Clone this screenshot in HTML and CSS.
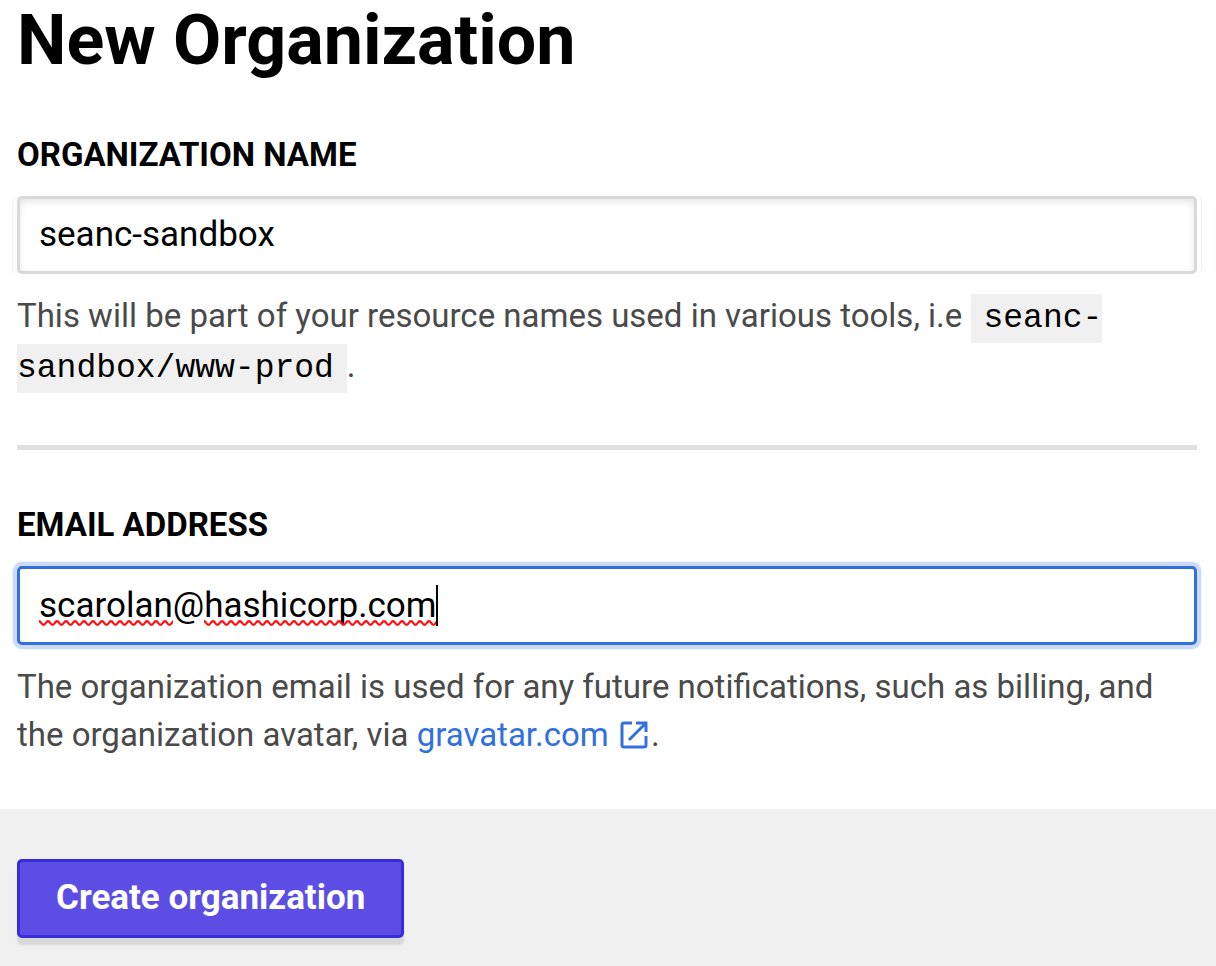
FILE: index.html
```html
<!DOCTYPE html>
<html lang="en">
<head>
<meta charset="utf-8">
<meta name="viewport" content="width=device-width, initial-scale=1">
<title>New Organization</title>
<link rel="stylesheet" href="styles.css">
</head>
<body>
<form class="org-form">
  <div class="fields">
    <h1 class="title">New Organization</h1>
    <div class="field">
      <label class="label" for="org-name">ORGANIZATION NAME</label>
      <input class="input" id="org-name" type="text" value="seanc-sandbox">
      <p class="help help-name">This will be part of your resource names used in various tools, i.e <code class="code">seanc-sandbox/www-prod</code>.</p>
    </div>
    <hr class="divider">
    <div class="field">
      <label class="label" for="org-email">EMAIL ADDRESS</label>
      <div class="input-wrap">
        <input class="input input-focus" id="org-email" type="text" spellcheck="false" value="scarolan@hashicorp.com">
        <div class="marks" aria-hidden="true"><span class="typo">scarolan</span>@<span class="typo">hashicorp.com</span><span class="caret"></span></div>
      </div>
      <p class="help">The organization email is used for any future notifications, such as billing, and the organization avatar, via <a class="link" href="#">gravatar.com <svg class="icon" viewBox="0 0 28 28" aria-hidden="true"><path d="M12 2H4Q2 2 2 4V24Q2 26 4 26H24Q26 26 26 24V15M16 2H26V11M25 3 9 19"/></svg></a>.</p>
    </div>
  </div>
  <div class="actions">
    <button class="button" type="button">Create organization</button>
  </div>
</form>
</body>
</html>
```
FILE: styles.css
```css
* {
  box-sizing: border-box;
}

body {
  margin: 0;
  background: #fff;
  color: #000;
  font-family: Roboto, "Liberation Sans", sans-serif;
  font-size: 33px;
}

.org-form {
  display: flex;
  flex-direction: column;
  min-height: 100vh;
}

.fields {
  padding: 0 19px 50px 17px;
}

.title {
  margin: 0 0 55px;
  font-size: 70px;
  line-height: 80px;
  font-weight: 700;
}

.label {
  display: block;
  margin-bottom: 21px;
  font-size: 33px;
  line-height: 40px;
  font-weight: 700;
}

.input {
  display: block;
  width: 100%;
  height: 78px;
  padding: 0 19px 2px;
  border: 3px solid #d9d9d9;
  border-radius: 5px;
  background: #fff;
  box-shadow: inset 0 3px 7px #e6e6e6, 4px 0 #fff, -4px 0 #fff, 5px 0 #edf1fd, -5px 0 #edf1fd;
  color: #000;
  font: 35px/40px Roboto, "Liberation Sans", sans-serif;
  outline: none;
}

.input-wrap {
  position: relative;
}

.input-focus {
  height: 79px;
  padding-bottom: 0;
  border-color: #3270de;
  box-shadow: 0 0 0 4px #cddbf6, 0 0 0 5px #edf3fd;
}

.marks {
  position: absolute;
  top: 19px;
  left: 22px;
  display: flex;
  color: transparent;
  font-size: 35px;
  line-height: 40px;
  pointer-events: none;
}

.typo {
  padding-bottom: 1px;
  background: url("data:image/svg+xml,%3Csvg xmlns='http://www.w3.org/2000/svg' width='9' height='6'%3E%3Cpath d='M-2.25 3Q0 -.5 2.25 3T6.75 3T11.25 3' fill='none' stroke='%23ff1010' stroke-width='2.3'/%3E%3C/svg%3E") repeat-x left bottom;
}

.caret {
  width: 2px;
  height: 41px;
  background: #000;
}

.help {
  margin: 18px 0 0;
  color: #4a4a4a;
  line-height: 48px;
}

.help-name {
  margin-top: 17px;
  line-height: 50px;
}

.code {
  padding: 6px 13px;
  background: #f0f0f0;
  color: #000;
  font-family: "Liberation Mono", monospace;
  font-size: 33px;
  line-height: 40px;
}

.divider {
  height: 5px;
  margin: 54px 0 55px;
  border: 0;
  background: #e0e0e0;
}

.link {
  color: #3270de;
  text-decoration: none;
}

.icon {
  width: 28px;
  height: 28px;
  margin: 0 3px;
  vertical-align: -3px;
  fill: none;
  stroke: currentColor;
  stroke-width: 3;
}

.actions {
  flex: 1;
  padding: 50px 17px 28px;
  background: #f0f0f0;
}

.button {
  padding: 15px 36px 17px;
  border: 3px solid #3a2bd8;
  border-radius: 5px;
  background: #5c4ee5;
  box-shadow: 0 7px 2px #d8d8d8;
  color: #fff;
  font: 700 35px/41px Roboto, "Liberation Sans", sans-serif;
}
```
